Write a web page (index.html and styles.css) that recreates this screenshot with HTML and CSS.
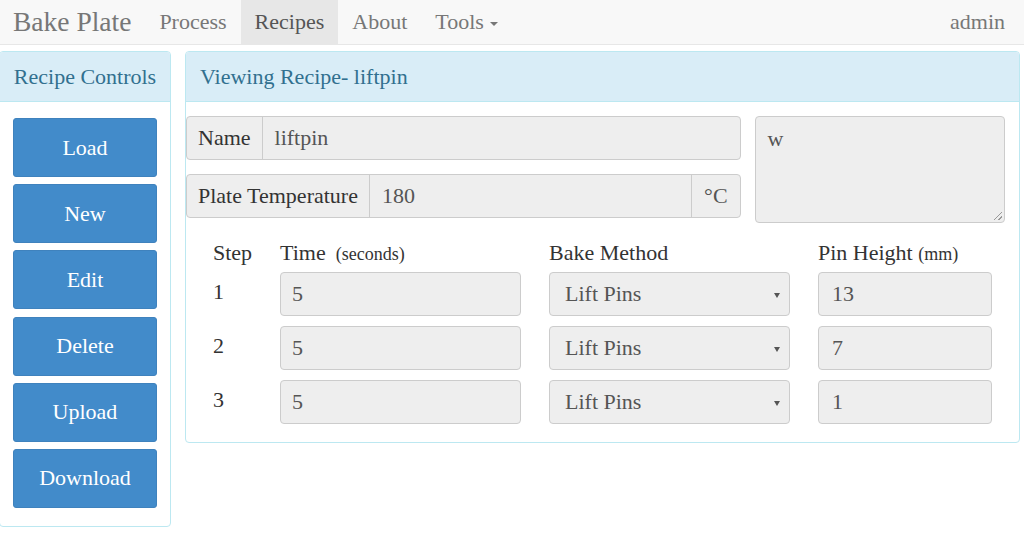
FILE: index.html
```html
<!DOCTYPE html>
<html>
<head>
<meta charset="utf-8">
<link rel="stylesheet" href="styles.css">
</head>
<body>
<nav class="navbar">
  <div class="brand">Bake Plate</div>
  <ul class="nav">
    <li>Process</li>
    <li class="active">Recipes</li>
    <li>About</li>
    <li>Tools <span class="caret"></span></li>
  </ul>
  <div class="user">admin</div>
</nav>
<main class="main">
  <section class="panel side">
    <div class="panel-heading center">Recipe Controls</div>
    <div class="panel-body side-body">
      <button class="btn">Load</button>
      <button class="btn">New</button>
      <button class="btn">Edit</button>
      <button class="btn">Delete</button>
      <button class="btn">Upload</button>
      <button class="btn">Download</button>
    </div>
  </section>
  <section class="panel content">
    <div class="panel-heading">Viewing Recipe- liftpin</div>
    <div class="panel-body content-body">
      <div class="top-row">
        <div class="groups">
          <div class="input-group">
            <span class="addon">Name</span>
            <span class="field">liftpin</span>
          </div>
          <div class="input-group">
            <span class="addon">Plate Temperature</span>
            <span class="field">180</span>
            <span class="addon right">°C</span>
          </div>
        </div>
        <div class="textarea">w<span class="grip"></span></div>
      </div>
      <div class="steps">
        <div class="th">Step</div>
        <div class="th">Time <small>&nbsp;(seconds)</small></div>
        <div class="th">Bake Method</div>
        <div class="th">Pin Height <small>(mm)</small></div>

        <div class="num">1</div>
        <div class="input">5</div>
        <div class="input select">Lift Pins<span class="arrow"></span></div>
        <div class="input pin">13</div>

        <div class="num">2</div>
        <div class="input">5</div>
        <div class="input select">Lift Pins<span class="arrow"></span></div>
        <div class="input pin">7</div>

        <div class="num">3</div>
        <div class="input">5</div>
        <div class="input select">Lift Pins<span class="arrow"></span></div>
        <div class="input pin">1</div>
      </div>
    </div>
  </section>
</main>
</body>
</html>
```
FILE: styles.css
```css
* { box-sizing: border-box; }
html, body { margin: 0; padding: 0; }
body {
  font-family: "Liberation Serif", "Times New Roman", serif;
  font-size: 22px;
  color: #333;
  background: #fff;
}
.navbar {
  display: flex;
  align-items: center;
  height: 45px;
  background: #f8f8f8;
  border-bottom: 1px solid #e7e7e7;
}
.brand {
  font-size: 27.5px;
  color: #777;
  padding: 0 14px 0 13px;
  line-height: 44px;
}
.nav {
  display: flex;
  list-style: none;
  margin: 0;
  padding: 0;
  height: 44px;
}
.nav li {
  padding: 0 14px;
  line-height: 44px;
  color: #777;
}
.nav li.active {
  background: #e7e7e7;
  color: #555;
}
.caret {
  display: inline-block;
  width: 0;
  height: 0;
  border-left: 4px solid transparent;
  border-right: 4px solid transparent;
  border-top: 4px solid #777;
  vertical-align: middle;
  margin-left: 1px;
}
.user {
  margin-left: auto;
  padding-right: 19px;
  color: #777;
  line-height: 44px;
}
.main {
  display: flex;
  align-items: flex-start;
  gap: 14px;
  padding-top: 6px;
}
.panel {
  border: 1px solid #bce8f1;
  border-radius: 4px;
  background: #fff;
}
.panel-heading {
  background: #d9edf7;
  color: #31708f;
  border-bottom: 1px solid #bce8f1;
  height: 50px;
  line-height: 49px;
  padding: 0 14px;
  border-radius: 3px 3px 0 0;
}
.center { text-align: center; padding: 0; }
.side {
  width: 172px;
  margin-left: -1px;
}
.side-body {
  display: flex;
  flex-direction: column;
  gap: 7.2px;
  padding: 16px 0 18px 13px;
}
.btn {
  width: 144px;
  height: 59px;
  background: #428bca;
  border: 1px solid #3f82bd;
  border-radius: 3px;
  color: #fff;
  font-family: inherit;
  font-size: 22px;
  padding: 0;
}
.content {
  width: 835px;
}
.content-body {
  padding: 14px 14px 18px 0;
}
.top-row {
  display: flex;
  gap: 14px;
}
.groups {
  display: flex;
  flex-direction: column;
  gap: 14px;
  width: 556px;
}
.input-group {
  display: flex;
  height: 44px;
  border: 1px solid #ccc;
  border-radius: 4px;
  background: #eee;
}
.addon {
  padding: 0 11px;
  line-height: 42px;
  border-right: 1px solid #ccc;
  white-space: nowrap;
}
.addon.right {
  border-right: none;
  border-left: 1px solid #ccc;
  padding: 0 12px;
  color: #555;
}
.field {
  flex: 1;
  padding: 0 12px;
  line-height: 42px;
  color: #555;
}
.textarea {
  position: relative;
  width: 251px;
  height: 107px;
  border: 1px solid #ccc;
  border-radius: 4px;
  background: #eee;
  padding: 8px 12px;
  line-height: 28px;
  color: #555;
}
.grip {
  position: absolute;
  right: 2px;
  bottom: 2px;
  width: 8px;
  height: 8px;
  background: linear-gradient(135deg, transparent 45%, #999 45%, #999 55%, transparent 55%, transparent 75%, #999 75%, #999 85%, transparent 85%);
}
.steps {
  display: grid;
  grid-template-columns: 39px 241px 241px 174px;
  column-gap: 28px;
  row-gap: 10px;
  margin-left: 27px;
  margin-top: 15px;
}
.th {
  line-height: 30px;
  height: 30px;
  margin-bottom: -6px;
  white-space: nowrap;
}
.th small { font-size: 18px; }
.num {
  line-height: 28px;
  padding-top: 6px;
}
.input {
  position: relative;
  height: 44px;
  border: 1px solid #ccc;
  border-radius: 4px;
  background: #eee;
  padding: 0 11px;
  line-height: 42px;
  color: #555;
}
.select { padding-left: 15px; }
.pin { padding-left: 13px; }
.arrow {
  position: absolute;
  right: 9px;
  top: 20px;
  width: 0;
  height: 0;
  border-left: 3px solid transparent;
  border-right: 3px solid transparent;
  border-top: 5px solid #555;
}
```
